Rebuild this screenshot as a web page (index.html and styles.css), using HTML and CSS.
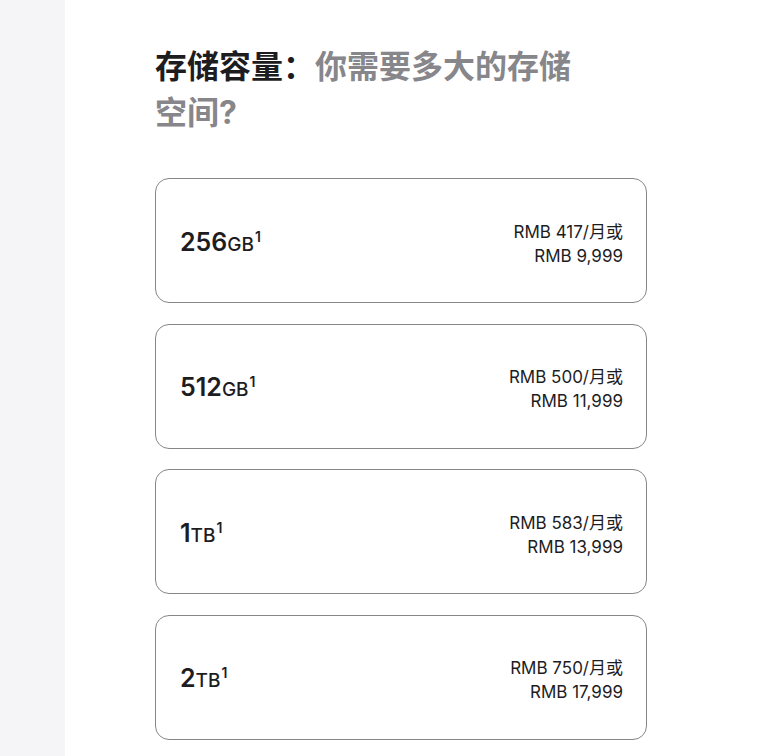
FILE: index.html
```html
<!DOCTYPE html>
<html lang="zh-CN">
<head>
  <meta charset="UTF-8">
  <meta name="viewport" content="width=device-width, initial-scale=1.0">
  <title>存储容量</title>
  <link rel="stylesheet" href="styles.css">
</head>
<body>
  <div class="page">
    <aside class="sidebar"></aside>

    <main class="content">
      <h2 class="title">存储容量：<span class="muted">你需要多大的存储空间?</span></h2>

      <div class="options">
        <div class="option">
          <div class="size"><span class="num">256</span><span class="unit">GB</span><sup>1</sup></div>
          <div class="price">RMB 417/月或<br>RMB 9,999</div>
        </div>
        <div class="option">
          <div class="size"><span class="num">512</span><span class="unit">GB</span><sup>1</sup></div>
          <div class="price">RMB 500/月或<br>RMB 11,999</div>
        </div>
        <div class="option">
          <div class="size"><span class="num">1</span><span class="unit">TB</span><sup>1</sup></div>
          <div class="price">RMB 583/月或<br>RMB 13,999</div>
        </div>
        <div class="option">
          <div class="size"><span class="num">2</span><span class="unit">TB</span><sup>1</sup></div>
          <div class="price">RMB 750/月或<br>RMB 17,999</div>
        </div>
      </div>
    </main>
  </div>
</body>
</html>
```

FILE: styles.css
```css
* {
  margin: 0;
  padding: 0;
  box-sizing: border-box;
  font-family: Inter, 'Noto Sans CJK SC', sans-serif;
}

body {
  background-color: #fff;
  color: #1d1d1f;
}

.page {
  display: flex;
  min-height: 756px;
}

.sidebar {
  width: 65px;
  flex-shrink: 0;
  background-color: #f5f5f7;
}

.content {
  padding: 44px 0 0 90px;
}

.title {
  max-width: 430px;
  font-size: 32px;
  font-weight: 700;
  line-height: 46px;
  color: #1d1d1f;
  margin-bottom: 42px;
}

.title .muted {
  color: #86868b;
}

.options {
  display: flex;
  flex-direction: column;
  gap: 20.5px;
  width: 492px;
}

.option {
  display: flex;
  justify-content: space-between;
  align-items: center;
  height: 125px;
  padding: 0 23px 0 24px;
  border: 1px solid #86868b;
  border-radius: 14px;
}

.size {
  color: #1d1d1f;
  font-weight: 600;
  white-space: nowrap;
  margin-top: 2px;
}

.size .num {
  font-size: 25px;
}

.size .unit {
  font-size: 19px;
  font-weight: 500;
}

.size sup {
  font-size: 14px;
  font-weight: 600;
  vertical-align: 9px;
  margin-left: 1px;
}

.price {
  text-align: right;
  font-size: 17px;
  line-height: 24px;
  color: #1d1d1f;
  margin-top: 6px;
}
```
